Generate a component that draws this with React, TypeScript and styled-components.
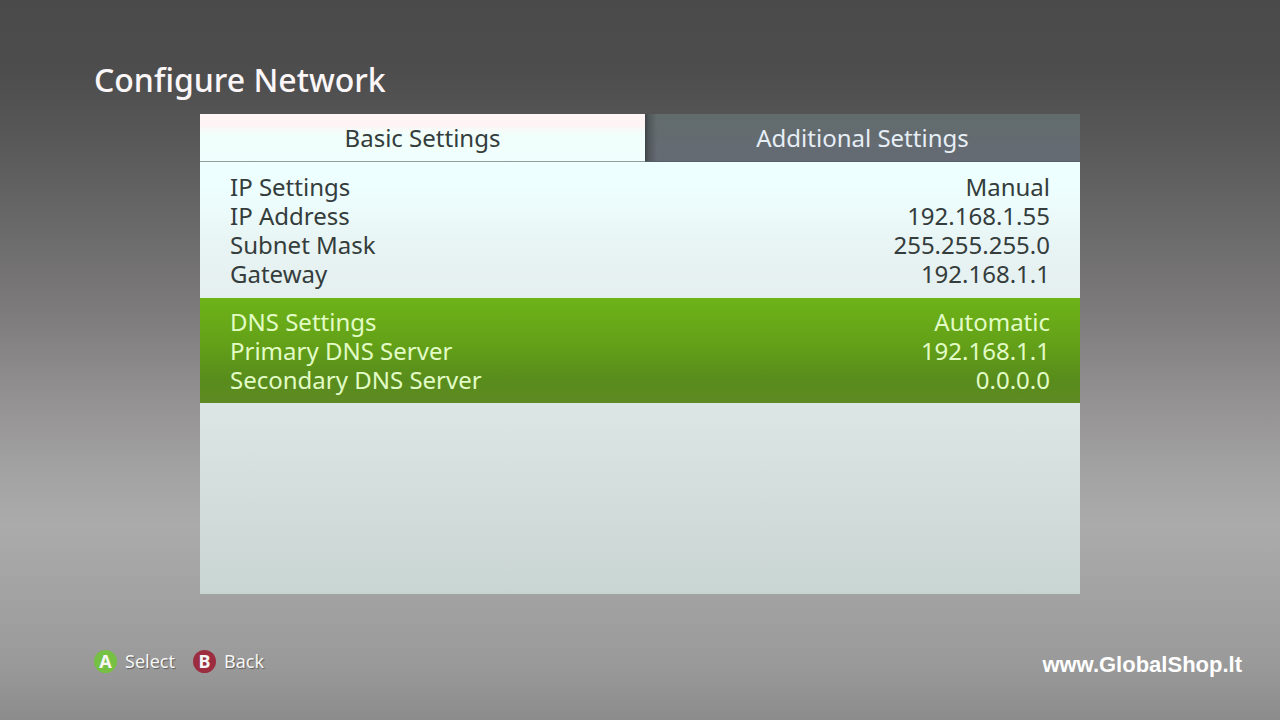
import React, { useState } from "react";
import styled, { createGlobalStyle } from "styled-components";

const GlobalStyle = createGlobalStyle`
  *, *::before, *::after { box-sizing: border-box; }
  body { margin: 0; background: #8e8e8e; }
  button, a { font: inherit; color: inherit; }
`;

const Screen = styled.div`
  display: flex;
  flex-direction: column;
  min-height: 100vh;
  padding: 56px 38px 38px 94px;
  font-family: "Noto Sans", "Open Sans", sans-serif;
  background: linear-gradient(
    #4a4a4a 0%,
    #4e4d4e 10%,
    #5a5959 20%,
    #6b6a6a 32%,
    #7e7c7d 44%,
    #949293 56%,
    #a3a2a3 65%,
    #acabac 73%,
    #a4a3a4 82%,
    #9a9a9a 92%,
    #8c8c8c 100%
  );
`;

const Title = styled.h1`
  margin: 0;
  font-size: 32px;
  line-height: 48px;
  font-weight: 500;
  color: #fbf7f9;
`;

const Panel = styled.main`
  display: flex;
  flex: 1;
  flex-direction: column;
  margin: 10px 162px 0 106px;
  background: linear-gradient(#eeffff 72px, #e8f3f3 136px, #dce6e5 290px, #c9d5d3 100%);
`;

const TabBar = styled.div`
  display: grid;
  grid-template-columns: 89fr 87fr;
`;

const Tab = styled.button<{ $active: boolean }>`
  height: 48px;
  padding: 0;
  border: 0;
  border-bottom: 1px solid ${(p) => (p.$active ? "#8f9d9b" : "#575f66")};
  font-size: 24px;
  line-height: 47px;
  color: ${(p) => (p.$active ? "#343d3c" : "#e6eef6")};
  background: ${(p) =>
    p.$active
      ? "linear-gradient(#fff6f6 0, #fff4f4 10px, #f1fffb 20px, #f0fffd 100%)"
      : "linear-gradient(90deg, #3f4346 0, rgba(74, 80, 83, 0.7) 4px, transparent 12px), linear-gradient(#626c6c, #656a74)"};
`;

const Group = styled.button<{ $selected: boolean }>`
  display: block;
  width: 100%;
  padding: ${(p) => (p.$selected ? "9px 30px" : "10px 30px")};
  border: 0;
  font-size: 24px;
  line-height: 29px;
  color: ${(p) => (p.$selected ? "#e2fcc6" : "#343d3c")};
  background: ${(p) =>
    p.$selected ? "linear-gradient(#6db318, #63a018 45%, #588c1c 78%, #5f8a24)" : "transparent"};
`;

const Row = styled.span`
  display: flex;
  justify-content: space-between;
`;

const Footer = styled.footer`
  display: flex;
  justify-content: space-between;
  align-items: flex-start;
  margin-top: 52px;
  height: 36px;
`;

const Hints = styled.div`
  display: flex;
  gap: 18px;
  padding-top: 3px;
`;

const Hint = styled.button`
  display: flex;
  align-items: center;
  gap: 8px;
  padding: 0;
  border: 0;
  background: none;
  font-size: 18px;
  line-height: 24px;
  color: #f6f6f6;
  text-shadow: 1px 1px 1px #5c5c5c;
`;

const Key = styled.span<{ $color: string }>`
  width: 23px;
  height: 23px;
  border-radius: 50%;
  background: ${(p) => p.$color};
  font-size: 18px;
  line-height: 23px;
  font-weight: 700;
  text-align: center;
  text-shadow: none;
`;

const SiteLink = styled.a`
  padding-top: 7px;
  font-family: "Liberation Sans", Arial, sans-serif;
  font-size: 22px;
  line-height: 24px;
  font-weight: 700;
  color: #ffffff;
  text-decoration: none;
`;

const tabs = ["Basic Settings", "Additional Settings"];

const groups = [
  [
    ["IP Settings", "Manual"],
    ["IP Address", "192.168.1.55"],
    ["Subnet Mask", "255.255.255.0"],
    ["Gateway", "192.168.1.1"],
  ],
  [
    ["DNS Settings", "Automatic"],
    ["Primary DNS Server", "192.168.1.1"],
    ["Secondary DNS Server", "0.0.0.0"],
  ],
];

export default function App() {
  const [tab, setTab] = useState(0);
  const [selected, setSelected] = useState(1);

  return (
    <>
      <GlobalStyle />
      <Screen>
        <Title>Configure Network</Title>
        <Panel>
          <TabBar role="tablist">
            {tabs.map((name, i) => (
              <Tab
                key={name}
                type="button"
                role="tab"
                aria-selected={i === tab}
                $active={i === tab}
                onClick={() => setTab(i)}
              >
                {name}
              </Tab>
            ))}
          </TabBar>
          {groups.map((rows, i) => (
            <Group
              key={rows[0][0]}
              type="button"
              $selected={i === selected}
              onClick={() => setSelected(i)}
            >
              {rows.map(([label, value]) => (
                <Row key={label}>
                  <span>{label}</span>
                  <span>{value}</span>
                </Row>
              ))}
            </Group>
          ))}
        </Panel>
        <Footer>
          <Hints>
            <Hint type="button">
              <Key $color="#76c043">A</Key>
              Select
            </Hint>
            <Hint type="button">
              <Key $color="#9c2c40">B</Key>
              Back
            </Hint>
          </Hints>
          <SiteLink href="#">www.GlobalShop.lt</SiteLink>
        </Footer>
      </Screen>
    </>
  );
}
